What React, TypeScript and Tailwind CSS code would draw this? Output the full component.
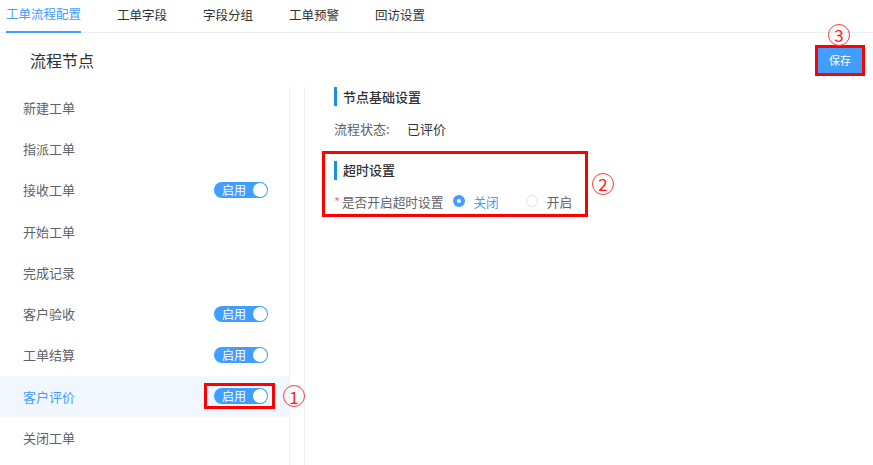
const tabs = ["工单流程配置", "工单字段", "字段分组", "工单预警", "回访设置"];

const nodes = [
  { name: "新建工单", on: false },
  { name: "指派工单", on: false },
  { name: "接收工单", on: true },
  { name: "开始工单", on: false },
  { name: "完成记录", on: false },
  { name: "客户验收", on: true },
  { name: "工单结算", on: true },
  { name: "客户评价", on: true, active: true },
  { name: "关闭工单", on: false },
];

function Mark({ n }: { n: string }) {
  return (
    <span className="flex h-[22px] w-[22px] items-center justify-center rounded-full border border-[#ff3b3b] text-[17px] leading-none text-[#ff1a1a]">
      {n}
    </span>
  );
}

function Toggle() {
  return (
    <span className="flex h-[16px] w-[54px] items-center justify-between rounded-full bg-[#409eff] pl-[8px] pr-[1px]">
      <span className="text-[12px] leading-none text-white">启用</span>
      <span className="h-[14px] w-[14px] rounded-full bg-white" />
    </span>
  );
}

function Heading({ children }: { children: string }) {
  return (
    <div className="flex h-[19px] items-center border-l-[3px] border-[#1890e8] pl-[6px] text-[13px] font-medium text-[#303133]">
      {children}
    </div>
  );
}

export default function App() {
  return (
    <div
      className="relative h-[465px] w-[873px] overflow-hidden bg-white"
      style={{ fontFamily: '"Noto Sans CJK SC", "Noto Sans", sans-serif' }}
    >
      <div className="flex h-[33px] gap-[36px] border-b border-[#eceef2] pl-[6px]">
        {tabs.map((t, i) => (
          <div
            key={t}
            className={`flex h-[33px] items-center pb-[3px] text-[12.5px] ${
              i === 0 ? "border-b-2 border-[#409eff] text-[#409eff]" : "text-[#303133]"
            }`}
          >
            {t}
          </div>
        ))}
      </div>

      <div className="flex h-[54px] items-center justify-between pl-[30px] pr-[8px]">
        <span className="text-[16px] text-[#303133]">流程节点</span>
        <div className="relative border-[3px] border-[#ff0000]">
          <button className="flex h-[25px] w-[44px] items-center justify-center bg-[#409eff] text-[11px] text-white">
            保存
          </button>
          <span className="absolute left-[10px] top-[-24px]">
            <Mark n="3" />
          </span>
        </div>
      </div>

      <div className="flex h-[378px]">
        <div className="w-[290px] border-r border-[#eef0f3]">
          {nodes.map((n) => (
            <div
              key={n.name}
              className={`flex h-[41.25px] items-center justify-between pl-[23px] pr-[21px] text-[13px] ${
                n.active ? "bg-[#f0f7ff] text-[#409eff]" : "text-[#606266]"
              }`}
            >
              <span>{n.name}</span>
              {n.on &&
                (n.active ? (
                  <span className="relative mr-[-7px] flex h-[26px] items-center border-[3px] border-[#ff0000] pl-[7px] pr-[4px]">
                    <Toggle />
                    <span className="absolute left-[76px] top-[-1px]">
                      <Mark n="1" />
                    </span>
                  </span>
                ) : (
                  <Toggle />
                ))}
            </div>
          ))}
        </div>

        <div className="ml-[14px] flex-1 border-l border-[#eef0f3] pl-[17px]">
          <div className="pl-[12px]">
            <Heading>节点基础设置</Heading>
            <div className="mt-[13px] flex text-[13px]">
              <span className="w-[73px] text-[#606266]">流程状态:</span>
              <span className="text-[#303133]">已评价</span>
            </div>
          </div>

          <div className="relative mt-[12px] w-[266px] border-[3px] border-[#ff0000] pb-[3px] pl-[9px] pt-[7px]">
            <Heading>超时设置</Heading>
            <div className="mt-[12px] flex items-center text-[12.7px]">
              <span className="mr-[2px] text-[#f56c6c]">*</span>
              <span className="text-[#606266]">是否开启超时设置</span>
              <span className="ml-[10px] flex h-[12px] w-[12px] items-center justify-center rounded-full bg-[#409eff]">
                <span className="h-[4px] w-[4px] rounded-full bg-white" />
              </span>
              <span className="ml-[8px] text-[#409eff]">关闭</span>
              <span className="ml-[27px] h-[12px] w-[12px] rounded-full border border-[#dcdfe6]" />
              <span className="ml-[9px] text-[#606266]">开启</span>
            </div>
            <span className="absolute left-[267px] top-[19px]">
              <Mark n="2" />
            </span>
          </div>
        </div>
      </div>
    </div>
  );
}
